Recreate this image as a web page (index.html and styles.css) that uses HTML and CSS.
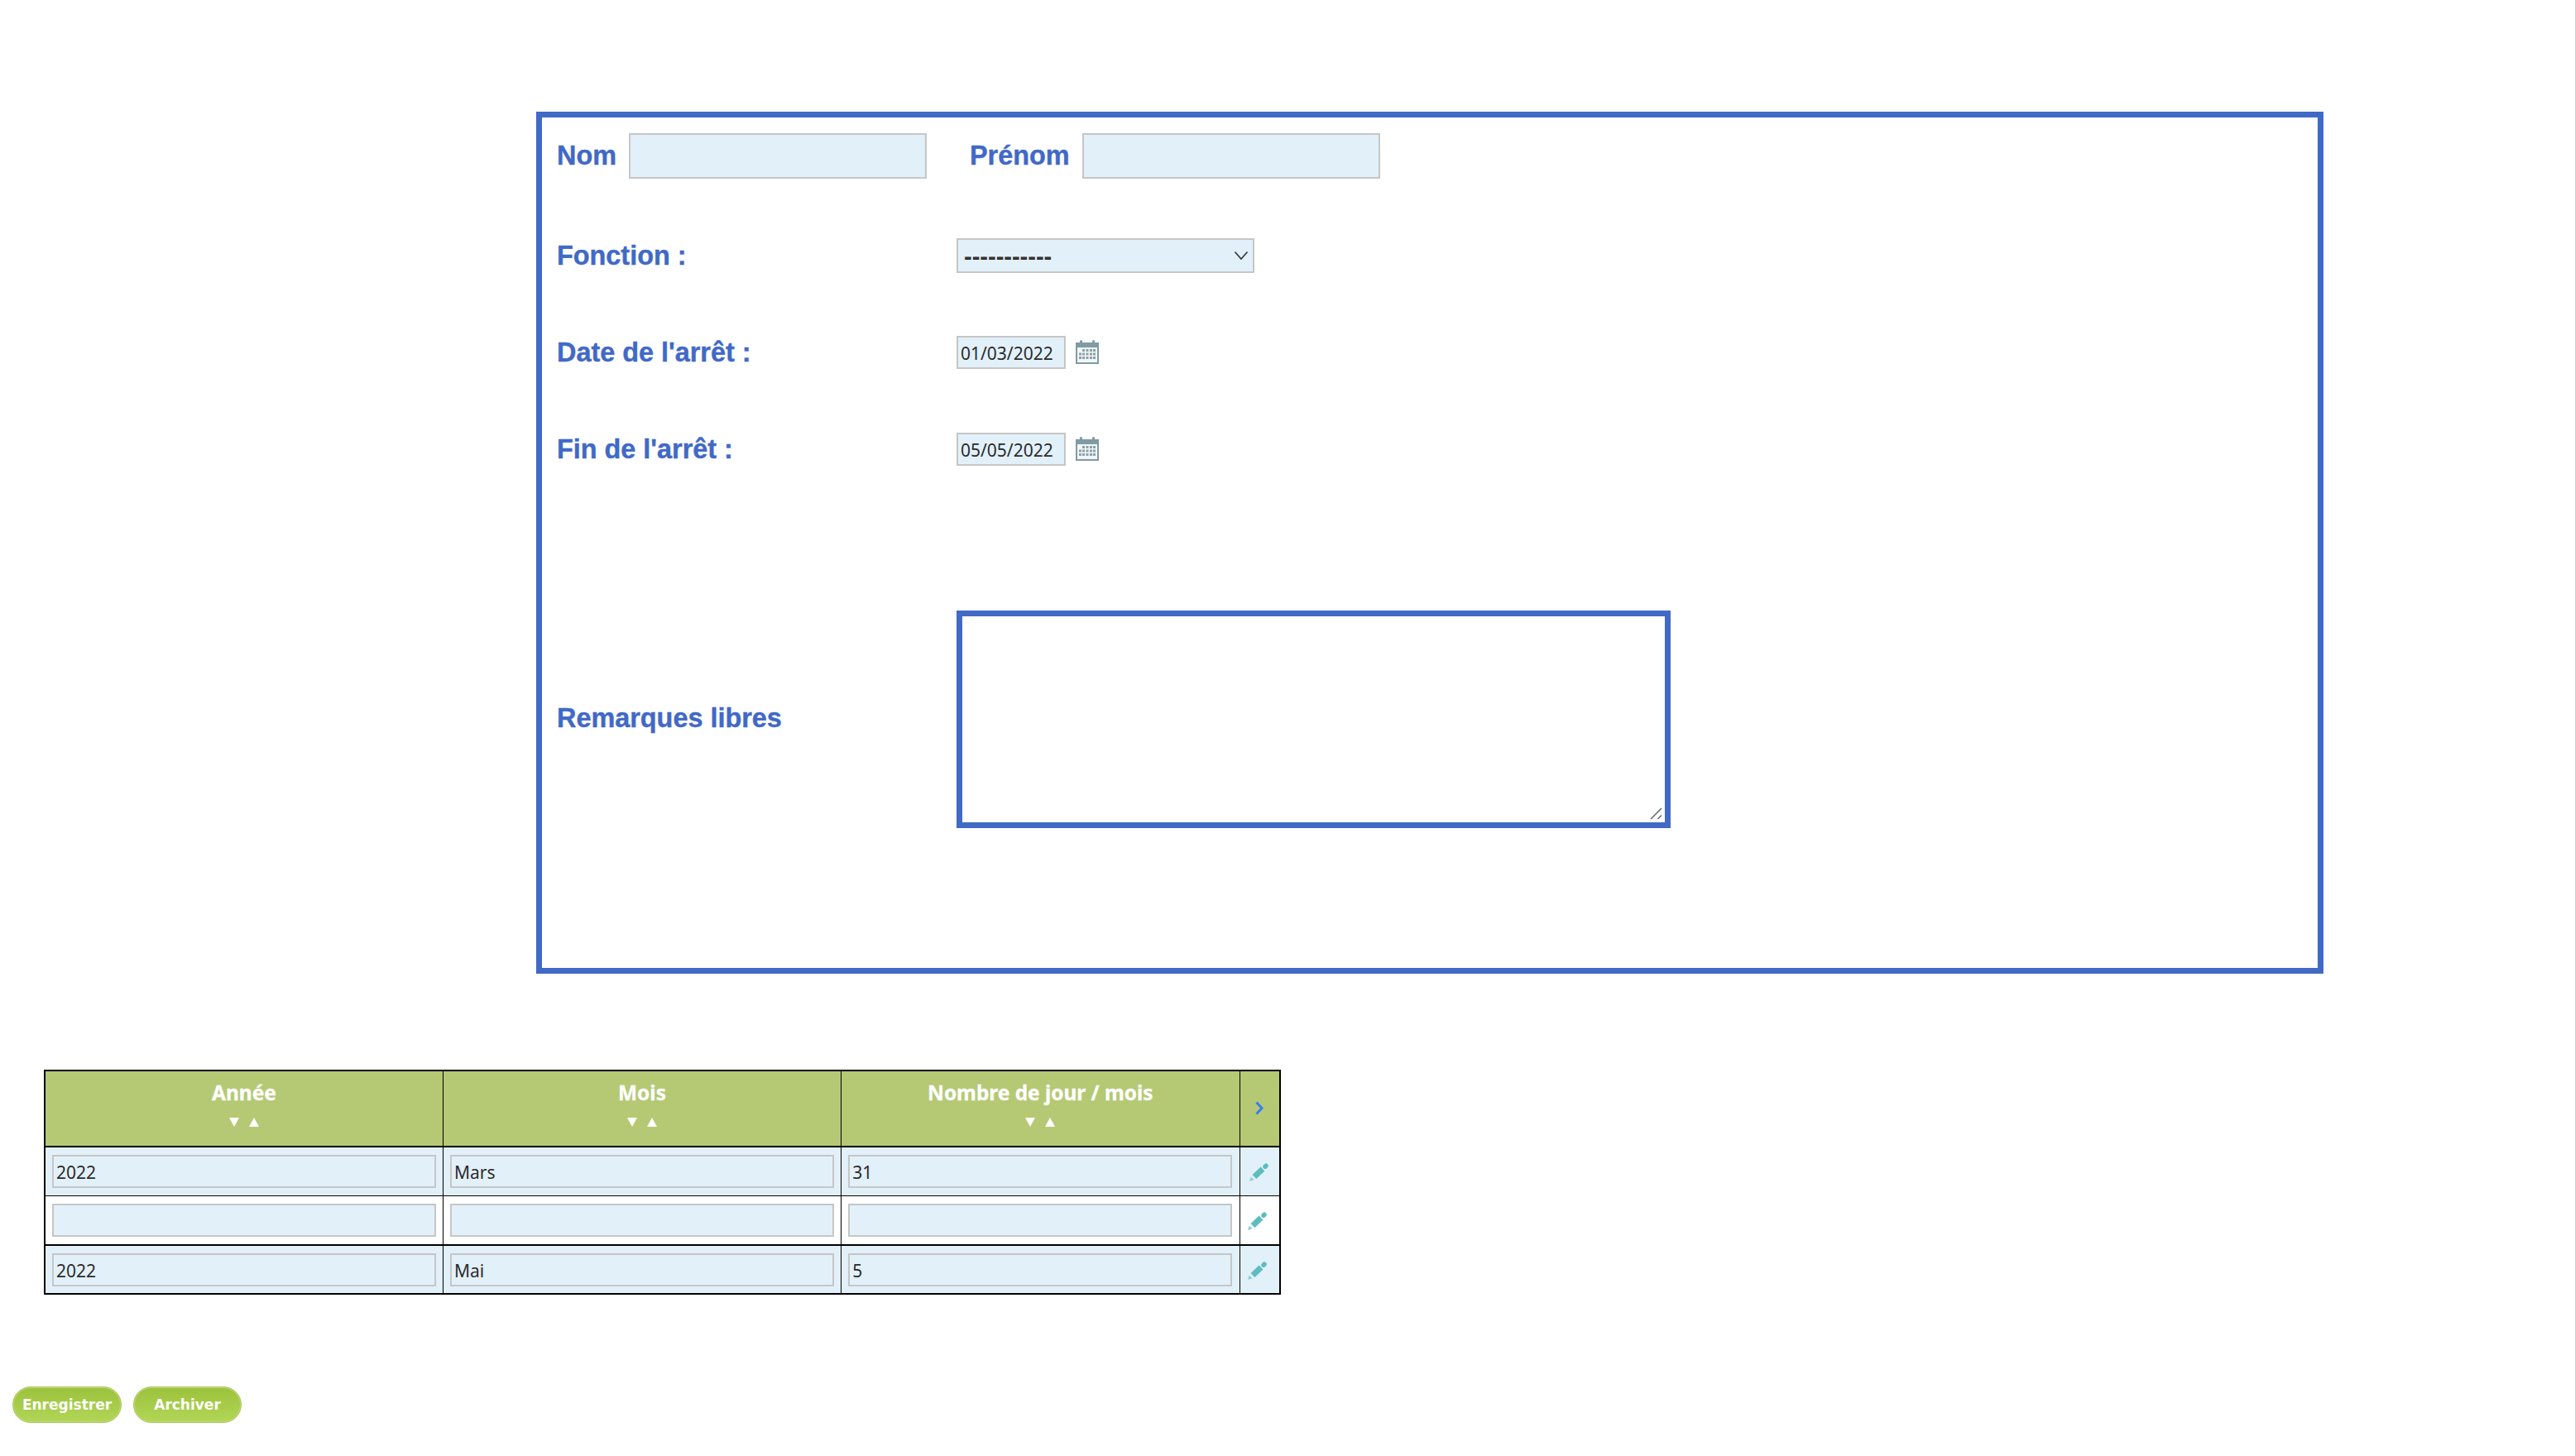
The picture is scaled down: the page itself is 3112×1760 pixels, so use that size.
FILE: index.html
```html
<!DOCTYPE html>
<html>
  <head>
    <meta charset="utf-8">
    <title>Arrêt de travail</title>
    <link rel="stylesheet" href="styles.css">
  </head>

  <body>
    <svg class="defs">
      <symbol id="cal" viewBox="0 0 28 29">
        <path fill="#7f9ba3" d="M0 3h5V1.500a1.500 1.500 0 0 1 3 0V3h12V1.500a1.500 1.500 0 0 1 3 0V3h5v26H0z"/>
        <rect x="2" y="9" width="24" height="18" fill="#f2f5f6"/>
        <path fill="#8aa3aa" d="M8 11h3v3H8zM12.500 11h3v3h-3zM17 11h3v3h-3zM21 11h3v3h-3zM4 15.500h3v3H4zM8 15.500h3v3H8zM12.500 15.500h3v3h-3zM17 15.500h3v3h-3zM21 15.500h3v3h-3zM4 20h3v3H4zM8 20h3v3H8zM12.500 20h3v3h-3zM17 20h3v3h-3zM21 20h3v3h-3z"/>
      </symbol>
      <symbol id="pen" viewBox="0 0 24 24">
        <path d="M7 17.500L17 8" fill="none" stroke="#5dbcc0" stroke-width="7"/>
        <path d="M20 5.200l1-1" fill="none" stroke="#5dbcc0" stroke-width="5.500" stroke-linecap="round"/>
        <path fill="#8ad0d2" d="M1 23l1.800-5.500 3.700 3.700z"/>
      </symbol>
    </svg>

    <form class="fiche">
      <div class="ligne ligne-nom">
        <label class="titre">Nom</label>
        <input type="text" class="champ champ-nom">
        <label class="titre titre-prenom">Prénom</label>
        <input type="text" class="champ champ-nom">
      </div>

      <div class="ligne ligne-fonction">
        <label class="titre titre-col">Fonction :</label>
        <div class="liste-bloc">
          <select class="champ liste">
            <option>-----------</option>
          </select>
          <svg class="fleche" viewBox="0 0 18 12"><path d="M1.500 1.500L9 10l7.500-8.500" fill="none" stroke="#333" stroke-width="1.600"/></svg>
        </div>
      </div>

      <div class="ligne ligne-date">
        <label class="titre titre-col">Date de l'arrêt :</label>
        <input type="text" class="champ date" value="01/03/2022">
        <svg class="cal"><use href="#cal"/></svg>
      </div>

      <div class="ligne ligne-date">
        <label class="titre titre-col">Fin de l'arrêt :</label>
        <input type="text" class="champ date" value="05/05/2022">
        <svg class="cal"><use href="#cal"/></svg>
      </div>

      <div class="ligne ligne-remarques">
        <label class="titre titre-col">Remarques libres</label>
        <div class="remarques-bloc">
          <textarea class="remarques"></textarea>
          <svg class="poignee" viewBox="0 0 15 15"><path d="M1 14L14 1M9.500 14L14 9.500" fill="none" stroke="#666" stroke-width="1.500"/></svg>
        </div>
      </div>
    </form>

    <table class="grille">
      <thead>
        <tr>
          <th class="col">Année<div class="tri"><i class="bas"></i><i class="haut"></i></div></th>
          <th class="col">Mois<div class="tri"><i class="bas"></i><i class="haut"></i></div></th>
          <th class="col">Nombre de jour / mois<div class="tri"><i class="bas"></i><i class="haut"></i></div></th>
          <th class="col-action">
            <svg class="chevron" viewBox="0 0 10 17"><path d="M1.500 1.500L8 8.500l-6.500 7" fill="none" stroke="#3b7ded" stroke-width="3"/></svg>
          </th>
        </tr>
      </thead>
      <tbody>
        <tr class="bleu">
          <td><input type="text" class="champ cellule" value="2022"></td>
          <td><input type="text" class="champ cellule" value="Mars"></td>
          <td><input type="text" class="champ cellule" value="31"></td>
          <td class="action action-un"><svg class="pen"><use href="#pen"/></svg></td>
        </tr>
        <tr class="milieu">
          <td><input type="text" class="champ cellule"></td>
          <td><input type="text" class="champ cellule"></td>
          <td><input type="text" class="champ cellule"></td>
          <td class="action"><svg class="pen"><use href="#pen"/></svg></td>
        </tr>
        <tr class="bleu sep">
          <td><input type="text" class="champ cellule" value="2022"></td>
          <td><input type="text" class="champ cellule" value="Mai"></td>
          <td><input type="text" class="champ cellule" value="5"></td>
          <td class="action"><svg class="pen"><use href="#pen"/></svg></td>
        </tr>
      </tbody>
    </table>

    <div class="boutons">
      <button class="btn btn-enr">Enregistrer</button>
      <button class="btn btn-arc">Archiver</button>
    </div>
  </body>
</html>
```

FILE: styles.css
```css
body {
  margin: 0;
  padding: 0;
  background-color: #fff;
  font-family: "Liberation Sans", Arial, sans-serif;
  color: #2b2b2b;
}
.defs {
  display: none;
}

/* formulaire */
.fiche {
  box-sizing: border-box;
  width: 2160px;
  margin: 135px 0 0 648px;
  padding: 19px 18px 169px;
  border: 7px solid #4169c6;
}
.ligne {
  display: flex;
  align-items: center;
}
.ligne-fonction {
  margin-top: 72px;
}
.ligne-date {
  margin-top: 76px;
}
.ligne-date + .ligne-date {
  margin-top: 77px;
}
.ligne-remarques {
  margin-top: 175px;
}
.ligne-remarques .titre {
  margin-top: -2px;
}
.titre {
  font-size: 32.400px;
  font-weight: bold;
  color: #4169c6;
  -webkit-text-stroke: 0.4px #4169c6;
}
.titre-col {
  width: 483px;
  flex: none;
}
.titre-prenom {
  margin-left: 52px;
}
.champ {
  box-sizing: border-box;
  margin: 0;
  padding: 2px 3px 0;
  background-color: #e2f0f9;
  border: 2px solid #c6c6c6;
  border-radius: 0;
  outline: none;
  font-family: "Noto Sans", sans-serif;
  font-size: 21px;
  color: #2b2b2b;
}
.champ-nom {
  width: 360px;
  height: 55px;
  margin-left: 15px;
}
.liste-bloc {
  position: relative;
  width: 360px;
  height: 42px;
}
.liste {
  appearance: none;
  width: 360px;
  height: 42px;
  padding: 2px 7px 0;
  font-family: "Liberation Sans", Arial, sans-serif;
  font-size: 29px;
  font-weight: bold;
  color: #333;
}
.fleche {
  position: absolute;
  right: 7px;
  top: 15px;
  width: 18px;
  height: 12px;
  pointer-events: none;
}
.date {
  width: 132px;
  height: 40px;
}
.cal {
  width: 28px;
  height: 29px;
  margin: 0 0 1px 12px;
}
.remarques-bloc {
  position: relative;
  width: 863px;
  height: 263px;
}
.remarques {
  display: block;
  box-sizing: border-box;
  width: 863px;
  height: 263px;
  margin: 0;
  border: 7px solid #4169c6;
  border-radius: 0;
  outline: none;
  resize: none;
  background-color: #fff;
}
.poignee {
  position: absolute;
  right: 10px;
  bottom: 10px;
  width: 15px;
  height: 15px;
}

/* tableau */
.grille {
  margin: 116px 0 0 53px;
  border-collapse: collapse;
  border: 2px solid #000;
  table-layout: fixed;
  width: 1495px;
  font-family: "Noto Sans", sans-serif;
}
.grille th, .grille td {
  border: 1px solid #000;
  padding: 0;
  box-sizing: border-box;
}
.grille th {
  height: 92px;
  background-color: #b5c974;
  border-bottom: 2px solid #000;
  color: #fff;
  font-size: 24.400px;
  line-height: 32px;
  font-weight: bold;
  -webkit-text-stroke: 0.3px #fff;
  vertical-align: top;
  padding-top: 10px;
}
.grille th.col-action {
  padding: 0 0 2px;
  vertical-align: middle;
  width: 49px;
}
.grille td {
  height: 59px;
  text-align: center;
  vertical-align: middle;
}
.grille .milieu td {
  height: 60px;
}
.bleu td {
  background-color: #e2f0f9;
}
.grille .sep td {
  border-top: 2px solid #000;
}
.tri {
  display: flex;
  justify-content: center;
  gap: 12px;
  margin-top: 14px;
}
.bas {
  width: 0;
  height: 0;
  border: 6px solid transparent;
  border-top: 11px solid #fff;
  border-bottom: 0;
}
.haut {
  width: 0;
  height: 0;
  border: 6px solid transparent;
  border-bottom: 11px solid #fff;
  border-top: 0;
}
.cellule {
  display: block;
  width: 464px;
  height: 40px;
  margin: 0 auto;
}
.chevron {
  display: block;
  width: 10px;
  height: 17px;
  margin: 0 auto;
}
.pen {
  display: block;
  width: 24px;
  height: 24px;
  margin: 2px 0 0 8px;
}
.action-un .pen {
  margin-left: 10px;
}

/* boutons */
.boutons {
  display: flex;
  gap: 14px;
  margin: 111px 0 0 15px;
}
.btn {
  height: 44px;
  padding: 0;
  border: 1px solid #a6c855;
  border-radius: 22px;
  box-shadow: inset 0 0 0 1px #c0db7c;
  background: linear-gradient(#9bc23c, #b2d556);
  color: #fff;
  font-family: "DejaVu Sans", Verdana, sans-serif;
  font-size: 17px;
  font-weight: bold;
  cursor: pointer;
}
.btn-enr {
  width: 132px;
}
.btn-arc {
  width: 131px;
}
```
